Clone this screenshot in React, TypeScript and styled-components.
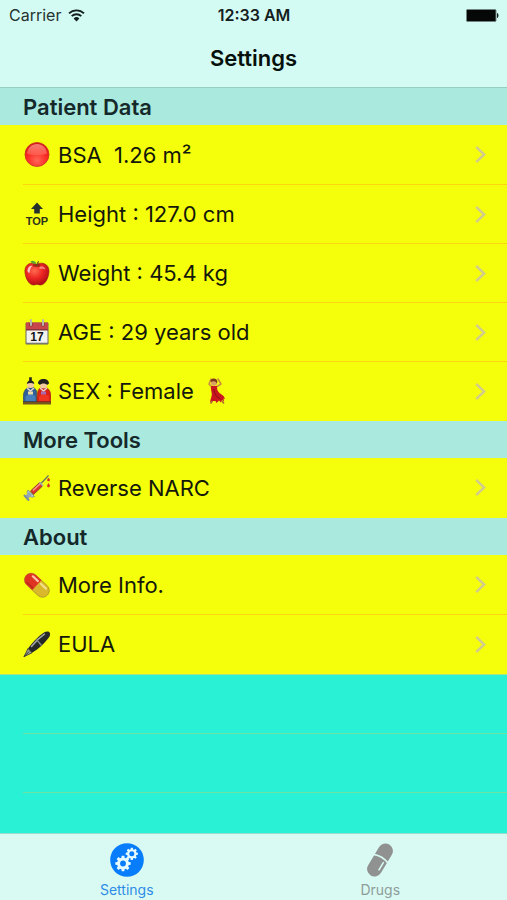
import React from 'react';
import styled, { createGlobalStyle } from 'styled-components';

const GlobalStyle = createGlobalStyle`
  *, *::before, *::after { box-sizing: border-box; }
  body {
    margin: 0;
    background: #29f1d5;
    color: #14180a;
    font-family: Inter, "Liberation Sans", sans-serif;
  }
`;

const Screen = styled.div`
  display: flex;
  flex-direction: column;
  min-height: 100vh;
`;

const TopBar = styled.header`
  background: #d4fbf3;
  border-bottom: 1px solid #98cdc4;
`;

const StatusBar = styled.div`
  display: grid;
  grid-template-columns: 1fr auto 1fr;
  align-items: center;
  height: 30px;
  padding: 0 8px 0 9px;
  font-size: 16px;
  color: #26332f;
`;

const Network = styled.span`
  display: flex;
  align-items: center;
  gap: 7px;
`;

const Clock = styled.time`
  font-weight: 600;
  color: #14201d;
`;

const Battery = styled.svg`
  justify-self: end;
`;

const Title = styled.h1`
  margin: 0;
  height: 57px;
  line-height: 56px;
  text-align: center;
  font-size: 22px;
  font-weight: 600;
  color: #06100d;
`;

const Main = styled.main`
  flex: 1;
  display: flex;
  flex-direction: column;
`;

const SectionTitle = styled.h2`
  margin: 0;
  padding-left: 23px;
  height: 37px;
  line-height: 38px;
  font-size: 22px;
  font-weight: 600;
  background: #a9e9de;
  color: #15282a;
`;

const List = styled.ul`
  margin: 0;
  padding: 0 0 1px;
  list-style: none;
  background: #f5ff0c;
`;

const Item = styled.li`
  padding-left: 23px;

  & + & > button {
    border-top: 1px solid #fbd50f;
  }
`;

const RowButton = styled.button`
  display: flex;
  align-items: center;
  width: 100%;
  height: 59px;
  padding: 0 21px 0 0;
  border: 0;
  background: none;
  color: inherit;
  font: inherit;
  font-size: 22px;
  text-align: left;
  cursor: pointer;
`;

const RowIcon = styled.svg`
  flex: none;
  width: 28px;
  height: 28px;
  margin-right: 7px;
`;

const RowText = styled.span`
  flex: 1;
  display: flex;
  align-items: center;
  gap: 8px;
  white-space: pre;
`;

const EmptyRows = styled.div`
  flex: 1;
  display: flex;
  flex-direction: column;
  padding-left: 23px;
  border-top: 1px solid #a6e58a;
`;

const EmptyRow = styled.div`
  height: 59px;
  border-bottom: 1px solid #6be4a6;
`;

const TabBar = styled.nav`
  display: grid;
  grid-template-columns: 1fr 1fr;
  height: 67px;
  background: #d8faf3;
  border-top: 1px solid #98dccf;
`;

const Tab = styled.button<{ $active?: boolean }>`
  display: flex;
  flex-direction: column;
  align-items: center;
  padding: 9px 0 0;
  gap: 4px;
  border: 0;
  background: none;
  font: inherit;
  font-size: 14px;
  line-height: 18px;
  color: ${(p) => (p.$active ? '#2f8ce6' : '#8e9d99')};
  cursor: pointer;
`;

const Wifi = () => (
  <svg width="17" height="13" viewBox="0 0 17 13" aria-hidden="true">
    <g fill="none" stroke="#14201d" strokeWidth="1.9">
      <path d="M1 4.4a10.7 10.7 0 0 1 15 0" />
      <path d="M3.7 7.2a6.8 6.8 0 0 1 9.6 0" />
    </g>
    <path d="M8.5 12.6 5.6 9.5a4.2 4.2 0 0 1 5.8 0z" fill="#14201d" />
  </svg>
);

const Ball = () => (
  <RowIcon viewBox="0 0 28 28" aria-hidden="true">
    <defs>
      <radialGradient id="ball" cx="50%" cy="75%" r="70%">
        <stop offset="0" stopColor="#ff6657" />
        <stop offset=".6" stopColor="#fb2a24" />
        <stop offset="1" stopColor="#d9141a" />
      </radialGradient>
      <linearGradient id="shine" x1="0" y1="0" x2="0" y2="1">
        <stop offset="0" stopColor="#ffc0b0" />
        <stop offset="1" stopColor="#ff6a58" />
      </linearGradient>
    </defs>
    <circle cx="14" cy="13.5" r="12" fill="url(#ball)" stroke="#c93522" strokeWidth=".8" />
    <path d="M4 12.5C4.500 7 8.500 3 14 3s9.500 4 10 9.500c-4 2-16 2-20 0z" fill="url(#shine)" opacity=".6" />
  </RowIcon>
);

const Top = () => (
  <RowIcon viewBox="0 0 28 28" aria-hidden="true">
    <path d="M14 2.500 20 9h-3.200v4.500h-5.600V9H8z" fill="#26302d" />
    <text x="14" y="24.500" textAnchor="middle" fontFamily="Liberation Sans, sans-serif" fontSize="11" fontWeight="700" fill="#2c321b">TOP</text>
  </RowIcon>
);

const Apple = () => (
  <RowIcon viewBox="0 0 28 28" aria-hidden="true">
    <defs>
      <radialGradient id="apple" cx="40%" cy="35%" r="70%">
        <stop offset="0" stopColor="#ff6a50" />
        <stop offset=".5" stopColor="#ec2622" />
        <stop offset="1" stopColor="#a90d14" />
      </radialGradient>
    </defs>
    <path d="M13.5 5.500C9 2.500 2 4.500 1.900 12c0 6 3.600 13.800 8.300 14 1.600.1 2.500-.6 3.800-.6s2.200.7 3.800.6C22.500 25.800 26 18 26 12c0-7.500-7.500-9.500-12.500-6.500z" fill="url(#apple)" stroke="#981516" strokeWidth=".6" />
    <ellipse cx="13.5" cy="6.500" rx="4" ry="1.400" fill="#7c1710" opacity=".65" />
    <path d="M13.600 7c0-2 .3-3.500 1.500-5l1 .5c-1 1.500-1.300 3-1.300 4.500z" fill="#65521c" />
    <path d="M13.500 4.500C12 1.500 9 1 7.500 2.400 9 4.800 11.500 5.300 13.500 4.500z" fill="#58a333" />
    <path d="M4.500 11c.5-3 2.500-4.500 5-4.200-2 1.500-2.500 4-3 7.200-1.400-.4-2.200-1.500-2-3z" fill="#fff" opacity=".7" />
    <path d="M16.500 8c2.500-1.500 5-.5 6 2.500-2-1-4-1-6-.5z" fill="#fff" opacity=".4" />
  </RowIcon>
);

const Calendar = () => (
  <RowIcon viewBox="0 0 28 28" aria-hidden="true">
    <path d="M3 5h22v21H3z" fill="#f3f3ee" stroke="#66665f" />
    <path d="M3 4.500h22V12H3z" fill="#c7454b" />
    <path d="M3 11h22v1.500H3z" fill="#87383d" />
    <path d="M3 24.700h22V26H3z" fill="#77786f" />
    <g fill="#87383d"><circle cx="8" cy="6.500" r="1.900" /><circle cx="20" cy="6.500" r="1.900" /></g>
    <path d="M8 2v5M20 2v5" stroke="#b8b8ad" strokeWidth="2" strokeLinecap="round" />
    <text x="14" y="23" textAnchor="middle" fontFamily="Liberation Sans, sans-serif" fontSize="12" fontWeight="700" fill="#15151a">17</text>
  </RowIcon>
);

const Dolls = () => (
  <RowIcon viewBox="0 0 28 28" aria-hidden="true">
    <path d="M0 24h28v3.500H0z" fill="#73551d" />
    <path d="M4 11c-3.500 2.500-4.500 8-3.500 13.500h13.200V14L11 10.500z" fill="#2f5f96" stroke="#29405a" strokeWidth=".6" />
    <path d="M17 11c-2.500 2-3 6-3 13.500h13.500c1-5 .5-11-3.500-13.500z" fill="#d92318" stroke="#8b1a18" strokeWidth=".6" />
    <path d="M2.500 19.500c3-3 7-3 10 0v4.500h-10z" fill="#477fbd" />
    <path d="M16 19.500c3-3 7-3 10 0v4.500H16z" fill="#f03422" />
    <circle cx="7.500" cy="7.500" r="3.500" fill="#f1cba2" />
    <circle cx="20.500" cy="8" r="3.500" fill="#f1cba2" />
    <path d="M3.800 7C4 4.500 6 3.800 6.200 3.500V.3h2.600v3.200C10 4 11.300 5 11.300 7 9 5.500 6 5.500 3.800 7z" fill="#21221f" />
    <path d="M15 6.500c0-2.500 2-4.500 5.500-4.500S26 4 26 6.500l-2 1.500c-1-2-6-2-7 0z" fill="#21221f" />
    <path d="m4 11 3.500 3 3.500-3M17 11l3.500 3 3.500-3" fill="none" stroke="#ead6d1" strokeWidth="1.500" />
    <path d="M5 14.500h5v3H5z" fill="#e9dbaa" />
    <path d="M18 14.500h5v3h-5z" fill="#aa6caf" />
  </RowIcon>
);

const Dancer = () => (
  <svg width="28" height="28" viewBox="0 0 28 28" aria-hidden="true">
    <path d="m10 10-3-3 2-5M15 9.500l4-2.500-3-5" fill="none" stroke="#c98a43" strokeWidth="1.500" strokeLinecap="round" strokeLinejoin="round" />
    <circle cx="12" cy="5.500" r="3.200" fill="#dba262" />
    <path d="M8.600 5C8 2 11 1 13 1.800c2.500.8 2.800 3 1.800 4.700-1-2.500-3-3-6.200-1.500z" fill="#7c3b18" />
    <path d="M9 9h6c0 3 .3 4.500 2 6.500 2 2 5 2.500 6 6.500l-1.500-.5.5 3-2-1.500-1 2.500-2-2-2.500 2.500-1-2L11 24l-3 1c.5-3.500 2-5.500 1.800-8C9.600 14 8.500 12 9 9z" fill="#c9171d" />
    <path d="M12 12c0 5 3 8 6.500 10" fill="none" stroke="#84121a" />
    <path d="M10.500 24 8.500 26.500M20 24l2 2.500" stroke="#b06b35" strokeWidth="1.600" />
  </svg>
);

const Syringe = () => (
  <RowIcon viewBox="0 0 28 28" aria-hidden="true">
    <path d="m18 9.500 7.500-8" stroke="#65716c" strokeWidth="1.200" />
    <path d="m7.500 17 9-8.500 3 3.500-9 8.500z" fill="#dd332b" stroke="#75383a" strokeWidth=".8" />
    <path d="m10 16.500 7.500-7" stroke="#ff9b8a" strokeWidth="1.400" />
    <path d="m5 16 6.500 6.500-3 .8-4.500-4.500z" fill="#b6c9d6" stroke="#70848d" strokeWidth=".7" />
    <path d="m7.500 19.500-4 4" stroke="#93a7b5" strokeWidth="4" />
    <path d="m1.500 21.500 4 4.500" stroke="#7b919f" strokeWidth="2" strokeLinecap="round" />
    <path d="m16.500 8 3.500 4" stroke="#a8b1a8" strokeWidth="1.500" />
    <path d="M25.500 4c-1.500 2-1.500 3 0 3s1.500-1 0-3zM25.500 9.500c-1.500 2-1.500 3.500 0 3.500s1.500-1.500 0-3.500z" fill="#d9301d" stroke="#d9301d" strokeWidth=".6" />
  </RowIcon>
);

const Capsule = () => (
  <RowIcon viewBox="0 0 28 28" aria-hidden="true">
    <g transform="rotate(43 14 14)">
      <rect x="-.5" y="7.500" width="29" height="13.500" rx="6.700" fill="#d9b82c" stroke="#a68a28" strokeWidth=".7" />
      <path d="M14 7.500H6.300a6.700 6.700 0 0 0 0 13.500H14z" fill="#df3422" />
      <path d="M5 10.500h7" stroke="#ffc3a9" strokeWidth="2.200" strokeLinecap="round" />
      <path d="M16 10.500h7" stroke="#f2e189" strokeWidth="2.200" strokeLinecap="round" />
      <path d="M5 19h8" stroke="#a92518" strokeWidth="1.600" strokeLinecap="round" opacity=".7" />
    </g>
  </RowIcon>
);

const Pen = () => (
  <RowIcon viewBox="0 0 28 28" aria-hidden="true">
    <path d="M5 18.500C9.500 12.500 15 6.500 21 2.500c2.500-1.500 5-1.300 5.800.2.700 1.500.2 3.500-1.300 5.300C21 14 15.500 19 9 22.800z" fill="#242827" />
    <path d="M8.500 16.500C12.500 11.500 17 7.200 21.500 4.200" fill="none" stroke="#a2a7a8" strokeWidth="1.500" strokeLinecap="round" />
    <path d="m13.500 9.500 5 6" stroke="#8b9090" strokeWidth="1.200" />
    <path d="M5 18.500 9 22.800 1 26.700z" fill="#9a9f94" stroke="#30342e" strokeWidth=".8" />
    <path d="m1 26.700 5-5" stroke="#2b2d27" strokeWidth=".9" />
  </RowIcon>
);

const Chevron = () => (
  <svg width="11" height="17" viewBox="0 0 11 17" aria-hidden="true">
    <path d="m1.200 1 8 7.500-8 7.500" fill="none" stroke="#d2cc8c" strokeWidth="2.400" />
  </svg>
);

const gearPath = (cx: number, cy: number, r: number, teeth: number) => {
  const points: string[] = [];
  const step = (Math.PI * 2) / teeth;
  for (let i = 0; i < teeth; i += 1) {
    [[-0.34, 0.76], [-0.22, 1], [0.22, 1], [0.34, 0.76]].forEach(([turn, reach]) => {
      const angle = (i + turn) * step;
      points.push(`${(cx + Math.cos(angle) * r * reach).toFixed(2)} ${(cy + Math.sin(angle) * r * reach).toFixed(2)}`);
    });
  }
  return `M${points.join('L')}Z`;
};

const Gears = () => (
  <svg width="34" height="34" viewBox="0 0 34 34" aria-hidden="true">
    <circle cx="17" cy="17" r="16.8" fill="#077dfb" />
    <path d={gearPath(13, 20.5, 7.8, 8)} fill="#e6fbff" />
    <circle cx="13" cy="20.5" r="2.9" fill="#077dfb" />
    <path d={gearPath(21.8, 10.8, 6.2, 8)} fill="#e6fbff" />
    <circle cx="21.8" cy="10.8" r="2.5" fill="#077dfb" />
  </svg>
);

const DrugsIcon = () => (
  <svg width="34" height="34" viewBox="0 0 34 34" aria-hidden="true">
    <g transform="rotate(-59 17 17)">
      <rect x="-1" y="9.500" width="36" height="15" rx="7.500" fill="#8f9291" />
      <path d="M18.500 8.500c2 5 2 12 0 17" fill="none" stroke="#d8faf3" strokeWidth="1.800" />
      <path d="M8 21.200h8.500" stroke="#d8faf3" strokeWidth="1.600" strokeLinecap="round" />
    </g>
  </svg>
);

type Entry = { icon: React.ReactNode; text: string; extra?: React.ReactNode };

const sections: { title: string; rows: Entry[] }[] = [
  {
    title: 'Patient Data',
    rows: [
      { icon: <Ball />, text: 'BSA  1.26 m²' },
      { icon: <Top />, text: 'Height : 127.0 cm' },
      { icon: <Apple />, text: 'Weight : 45.4 kg' },
      { icon: <Calendar />, text: 'AGE : 29 years old' },
      { icon: <Dolls />, text: 'SEX : Female', extra: <Dancer /> },
    ],
  },
  { title: 'More Tools', rows: [{ icon: <Syringe />, text: 'Reverse NARC' }] },
  {
    title: 'About',
    rows: [
      { icon: <Capsule />, text: 'More Info.' },
      { icon: <Pen />, text: 'EULA' },
    ],
  },
];

export default function App() {
  return (
    <>
      <GlobalStyle />
      <Screen>
        <TopBar>
          <StatusBar>
            <Network>Carrier <Wifi /></Network>
            <Clock>12:33 AM</Clock>
            <Battery width="33" height="13" viewBox="0 0 33 13" aria-hidden="true">
              <rect x=".5" y=".5" width="29.5" height="12" rx="1" fill="#050807" stroke="#71847f" />
              <path d="M31 4c2 .5 2 4.500 0 5z" fill="#14201d" />
            </Battery>
          </StatusBar>
          <Title>Settings</Title>
        </TopBar>
        <Main>
          {sections.map((section) => (
            <section key={section.title}>
              <SectionTitle>{section.title}</SectionTitle>
              <List>
                {section.rows.map((row) => (
                  <Item key={row.text}>
                    <RowButton type="button">
                      {row.icon}
                      <RowText>{row.text}{row.extra}</RowText>
                      <Chevron />
                    </RowButton>
                  </Item>
                ))}
              </List>
            </section>
          ))}
          <EmptyRows>
            <EmptyRow />
            <EmptyRow />
          </EmptyRows>
        </Main>
        <TabBar>
          <Tab type="button" $active aria-current="page"><Gears />Settings</Tab>
          <Tab type="button"><DrugsIcon />Drugs</Tab>
        </TabBar>
      </Screen>
    </>
  );
}
